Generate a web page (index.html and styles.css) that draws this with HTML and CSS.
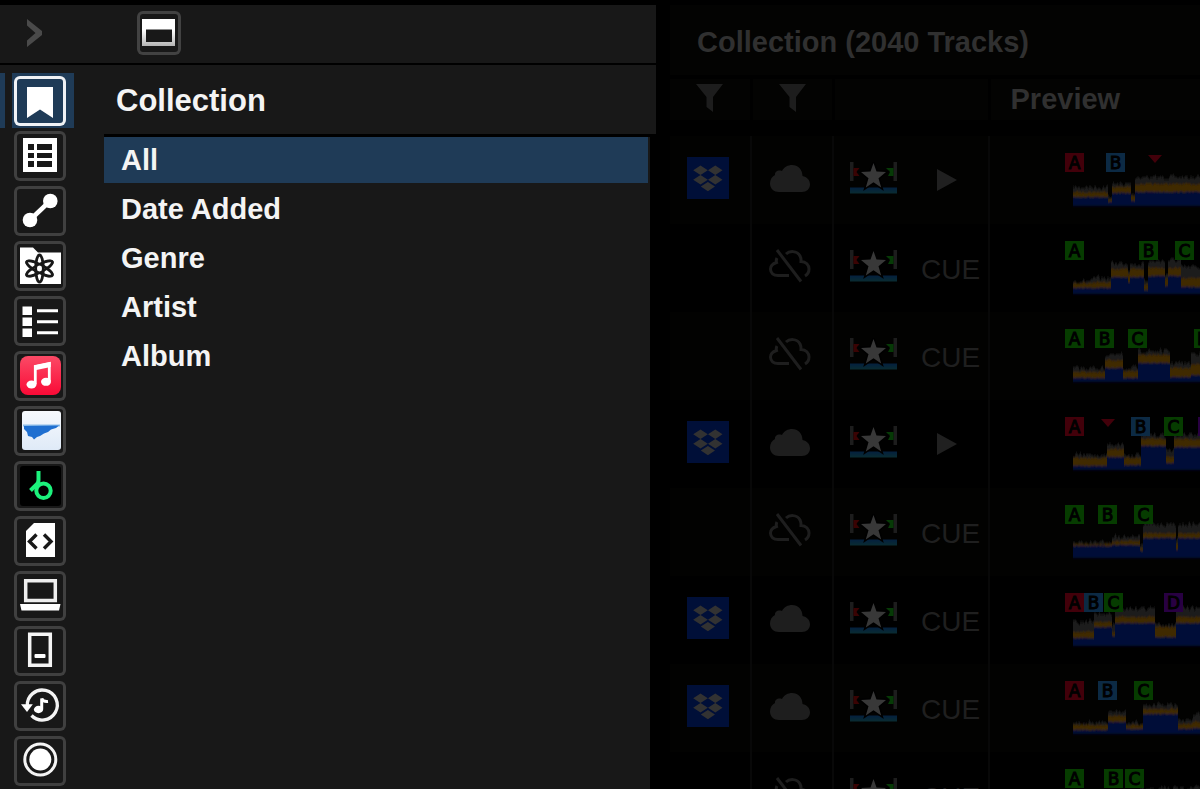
FILE: index.html
```html
<!DOCTYPE html>
<html lang="en">
<head>
<meta charset="utf-8">
<title>Collection</title>
<link rel="stylesheet" href="styles.css">
</head>
<body>
<svg class="defs" aria-hidden="true">
  <defs>
    <linearGradient id="g-pink" x1="0" y1="0" x2="0" y2="1"><stop offset="0" stop-color="#fb4a66"/><stop offset="1" stop-color="#fa0a36"/></linearGradient>
    <linearGradient id="g-sky" x1="0" y1="0" x2="0" y2="1"><stop offset="0" stop-color="#f6f9fd"/><stop offset="1" stop-color="#dfeaf7"/></linearGradient>
    <linearGradient id="g-silver" x1="0" y1="0" x2="0" y2="1"><stop offset=".4" stop-color="#fff"/><stop offset="1" stop-color="#b4b4b4"/></linearGradient>
    <linearGradient id="g-bar" x1="0" y1="0" x2="0" y2="1"><stop offset="0" stop-color="#04203f"/><stop offset="1" stop-color="#0a2c31"/></linearGradient>
    <filter id="haze" x="-5%" y="-20%" width="110%" height="140%"><feGaussianBlur stdDeviation="0.4 1"/></filter>
    <symbol id="funnel" viewBox="0 0 27 28"><path d="M0 0H27L17 13V28L10.500 23V13Z" fill="#1d1d1d"/></symbol>
    <symbol id="dropbox" viewBox="0 0 42 42"><path fill="#000f38" d="M0 0H42V42H0Z"/><path fill="#323232" d="M13.500 8.500L20.800 13.200L13.500 18L6.200 13.200ZM28.300 8.500L35.500 13.200L28.300 18L21 13.200ZM13.500 18L20.800 22.700L13.500 27.400L6.200 22.700ZM28.300 18L35.500 22.700L28.300 27.400L21 22.700ZM20.900 25L28 29.600L20.900 34.300L13.800 29.600Z"/></symbol>
    <symbol id="cloud" viewBox="0 0 40 27"><path fill="#1e1e1e" d="M9 27C4 27 0 23.500 0 18.500C0 14.500 2 11.500 5 10C4.500 7 8 4.500 12 6C14 2 18 0 22 0C28 0 32.500 4.500 32.500 11C37 12 40 15 40 19.500C40 24 36.500 27 32 27Z"/></symbol>
    <symbol id="cloud-off" viewBox="0 0 42 34"><g fill="none" stroke="#1e1e1e" stroke-width="3"><path d="M8 9C7 11 7 12 7.500 13.500C3 15 1.500 17 1.500 20C1.500 24 4.500 26.500 9 26.500H20"/><path d="M17 5C20 2 28 1 31 7C32.500 10 32 12 32 12.500C37 12.500 40 16 40 20C40 23.500 38.500 25.500 36 27"/><path d="M8 1L32 32.500"/></g></symbol>
    <symbol id="rated" viewBox="0 0 47 32"><path fill="#1d1d1d" d="M0 0H3.500V19H0ZM43.500 0H47V19H43.500Z"/><path fill="#3a0303" d="M3.500 6H9.500L6.500 10L9.500 14H3.500Z"/><path fill="#063a06" d="M43.500 6H36L40 10L38 14H43.500Z"/><path fill="url(#g-bar)" d="M0 25.500H47V31.500H0Z"/><path fill="#383838" stroke="#000" stroke-width="3" paint-order="stroke" d="M23.500 1L26.500 9.500L36 10L28.500 16.200L31.200 25.500L23.500 20.300L15.800 25.500L18.500 16.200L11 10L20.500 9.500Z"/></symbol>
    <symbol id="play" viewBox="0 0 20 22"><path fill="#202020" d="M0 0L20 11L0 22Z"/></symbol>
  </defs>
</svg>
<div class="app">
  <aside class="browser">
    <div class="toolbar">
      <button class="expand" aria-label="Expand"><svg width="15" height="28" viewBox="0 0 15 28"><path d="M0 0L15 12V16L0 28V21.500L8.500 14L0 6.500Z" fill="#4a4a4a"/></svg></button>
      <button class="view" aria-label="Panel view"><svg width="44" height="44" viewBox="0 0 44 44"><path fill="url(#g-silver)" fill-rule="evenodd" d="M5 8H38V35H5ZM9 18.500V31H35V18.500Z"/></svg></button>
    </div>
    <div class="body">
      <nav aria-label="Sources">
        <ul class="rail">
          <li class="active"><button aria-label="Collection"><svg viewBox="0 0 52 50"><path fill="#fff" d="M13 11H39V42L26 33.500L13 42Z"/></svg></button></li>
          <li><button aria-label="Playlists"><svg viewBox="0 0 52 50"><path fill="#fff" fill-rule="evenodd" d="M9 7H43V41H9ZM14 13V19H20V13ZM23 13V19H38V13ZM14 22V27H20V22ZM23 22V27H38V22ZM14 30V36H20V30ZM23 30V36H38V30Z"/></svg></button></li>
          <li><button aria-label="Matching"><svg viewBox="0 0 52 50"><path d="M16 34L36 15" stroke="#fff" stroke-width="4.500"/><circle cx="16" cy="34" r="7.300" fill="#fff"/><circle cx="36.300" cy="15" r="7.300" fill="#fff"/></svg></button></li>
          <li><button aria-label="Intelligent playlists"><svg viewBox="0 0 52 50"><path fill="#fff" d="M6 6.500H19L24 11.500H47V43H6Z"/><g fill="#fff" stroke="#181818" stroke-width="2.800"><ellipse cx="25.500" cy="27.500" rx="4" ry="14.500" transform="rotate(62 25.500 27.500)"/><ellipse cx="25.500" cy="27.500" rx="4" ry="14.500" transform="rotate(-62 25.500 27.500)"/><ellipse cx="25.500" cy="27.500" rx="3.800" ry="13.500"/></g><g fill="none" stroke="#181818" stroke-width="2.200"><ellipse cx="25.500" cy="27.500" rx="4" ry="14.500" transform="rotate(62 25.500 27.500)"/><ellipse cx="25.500" cy="27.500" rx="4" ry="14.500" transform="rotate(-62 25.500 27.500)"/></g><circle cx="25.500" cy="27.500" r="1.800" fill="#fff"/></svg></button></li>
          <li><button aria-label="Track list"><svg viewBox="0 0 52 50"><path fill="#fff" d="M8.500 10.500H18V19H8.500ZM8.500 21.500H18V30H8.500ZM8.500 32.500H18V41H8.500ZM23 13.200H44V16.200H23ZM23 24.200H44V27.200H23ZM23 35.200H44V38.200H23Z"/></svg></button></li>
          <li><button aria-label="Music"><svg viewBox="0 0 52 50"><rect x="6" y="5" width="41" height="39" rx="8" fill="url(#g-pink)"/><path d="M21.300 33V15.500L35.300 12.500V30" fill="none" stroke="#fff" stroke-width="2.800"/><path d="M20 14.500L36.700 11V16L20 19.500Z" fill="#fff"/><ellipse cx="17.500" cy="33.500" rx="5" ry="4" fill="#fff"/><ellipse cx="32" cy="30.800" rx="5" ry="4" fill="#fff"/></svg></button></li>
          <li><button aria-label="Streaming"><svg viewBox="0 0 52 50"><rect x="8" y="5" width="39" height="39" rx="3" fill="url(#g-sky)"/><path d="M9 19.500H46" stroke="#8dbdea" stroke-width="2"/><path fill="#1f6fd0" d="M10 20L45 19.500L42 22L37 23.500L34 26L30 27.500L26 30L23 31L20 33.500L18 31L14 30L13 26L10 23Z"/></svg></button></li>
          <li><button aria-label="Beatport"><svg viewBox="0 0 52 50"><rect x="6" y="5" width="41" height="40" rx="3" fill="#000"/><g fill="none" stroke="#1cf27c" stroke-width="4"><circle cx="29.500" cy="29.700" r="7.200"/><path d="M24.500 10V19Q24.500 22 22 24L16.500 29.500"/></g></svg></button></li>
          <li><button aria-label="XML"><svg viewBox="0 0 52 50"><path fill="#fff" d="M20 7H41V41H12V15Z"/><path d="M22.500 18.500L15.500 25.500L22.500 32.500M30 18.500L37 25.500L30 32.500" fill="none" stroke="#181818" stroke-width="3.400"/></svg></button></li>
          <li><button aria-label="Explorer"><svg viewBox="0 0 52 50"><path fill="none" stroke="#eee" stroke-width="3.500" d="M11.700 9.700H41.300V29.500H11.700Z"/><path fill="#fff" d="M6 33H46.500L45 39.500H7.500Z"/></svg></button></li>
          <li><button aria-label="Devices"><svg viewBox="0 0 52 50"><path fill="none" stroke="#f4f4f4" stroke-width="3.500" d="M15.700 8.200H36.300V39.200H15.700Z"/><rect x="20.500" y="28" width="11" height="4" rx="1" fill="#fff"/></svg></button></li>
          <li><button aria-label="Histories"><svg viewBox="0 0 52 50"><path fill="none" stroke="#f4f4f4" stroke-width="3.300" d="M13.300 25A15 15 0 1 1 17.500 34.500"/><path fill="#fff" d="M7 23.300H18.800L13 31Z"/><ellipse cx="24.500" cy="28.500" rx="4.600" ry="3.700" fill="#fff"/><path d="M27.700 28V17.500Q29 21 34 20.500" fill="none" stroke="#fff" stroke-width="3"/></svg></button></li>
          <li><button aria-label="Record"><svg viewBox="0 0 52 50"><circle cx="26.300" cy="23.500" r="15.500" fill="none" stroke="#f4f4f4" stroke-width="3"/><circle cx="26.300" cy="23.500" r="11" fill="#fff"/></svg></button></li>
        </ul>
      </nav>
      <section class="tree">
        <h1>Collection</h1>
        <ul class="nodes">
          <li><a class="selected" href="#all">All</a></li>
          <li><a href="#date">Date Added</a></li>
          <li><a href="#genre">Genre</a></li>
          <li><a href="#artist">Artist</a></li>
          <li><a href="#album">Album</a></li>
        </ul>
      </section>
    </div>
  </aside>
  <main class="tracks">
    <h2>Collection (2040 Tracks)</h2>
    <table>
      <colgroup><col class="c-drop"><col class="c-cloud"><col class="c-cue"><col></colgroup>
      <thead>
        <tr>
          <th aria-label="Filter source"><svg width="27" height="28"><use href="#funnel"/></svg></th>
          <th aria-label="Filter cloud"><svg width="27" height="28"><use href="#funnel"/></svg></th>
          <th aria-label="Cue"></th>
          <th class="preview">Preview</th>
        </tr>
      </thead>
      <tbody id="rows"></tbody>
    </table>
  </main>
</div>
<script src="app.js"></script>
</body>
</html>
```

FILE: styles.css
```css
* { box-sizing: border-box; }

body {
  margin: 0;
  background: #000;
  color: #f4f4f4;
  font-family: "Liberation Sans", Arial, sans-serif;
  overflow: hidden;
}

ul { list-style: none; margin: 0; padding: 0; }
svg { display: block; }
button { padding: 0; border: 0; background: none; }
.defs { position: absolute; width: 0; height: 0; }

.app {
  display: grid;
  grid-template-columns: minmax(0, 656fr) minmax(0, 530fr);
  gap: 14px;
  height: 100vh;
  padding-top: 5px;
}

.browser {
  display: flex;
  flex-direction: column;
  gap: 2px;
  min-height: 0;
}

.toolbar {
  display: flex;
  align-items: center;
  gap: 95px;
  height: 58px;
  flex: none;
  padding-left: 27px;
  padding-bottom: 3px;
  background: #181818;
}

.view {
  border-radius: 6px;
  box-shadow: inset 0 0 0 3px #424242;
}

.body {
  display: flex;
  flex: 1;
  min-height: 0;
  background: linear-gradient(#181818, #181818) left / calc(100% - 6px) 100% no-repeat;
}

.rail { width: 104px; padding-top: 8px; }
.rail li { height: 55px; padding: 3px 0 0 14px; }
.rail svg { width: 52px; height: 50px; }
.rail button {
  border-radius: 6px;
  box-shadow: inset 0 0 0 3px #404040;
}
.rail .active {
  background: linear-gradient(90deg, #1f3b57 5px, #181818 5px 12px, #1f3b57 12px 74px, #181818 74px);
}
.rail .active button { box-shadow: inset 0 0 0 3px #f0f2f5; }

.tree { flex: 1; min-width: 0; }

h1 {
  margin: 0;
  height: 72px;
  padding-left: 12px;
  border-bottom: 3px solid #000;
  background: #181818;
  font-size: 31px;
  line-height: 72px;
}

.nodes { padding-right: 8px; }
.nodes li { height: 49px; }
.nodes a {
  display: block;
  height: 46px;
  padding-left: 17px;
  color: inherit;
  font-size: 29px;
  font-weight: bold;
  line-height: 46px;
  text-decoration: none;
}
.nodes .selected { background: #1f3b57; }

.tracks { min-width: 0; overflow: hidden; }

h2 {
  margin: 0 0 4px;
  height: 70px;
  padding-left: 27px;
  background: #030302;
  color: #303030;
  font-size: 29px;
  line-height: 74px;
}

table {
  width: 100%;
  table-layout: fixed;
  border-collapse: collapse;
}
.c-drop { width: 81px; }
.c-cloud { width: 82px; }
.c-cue { width: 156px; }

th {
  height: 41px;
  padding: 0;
  border-right: 3px solid #000;
  background: #030302;
}
th svg { margin: 0 auto 4px; }
th.preview {
  padding-left: 20px;
  border-right: 0;
  color: #303030;
  font-size: 29px;
  line-height: 41px;
  text-align: left;
}
thead { border-bottom: 16px solid #000; }

td {
  height: 88px;
  padding: 0 4px 4px 0;
  border-right: 2px solid #080808;
  vertical-align: middle;
}
td:last-child { padding: 0; border-right: 0; overflow: hidden; }
tr:nth-child(odd) td { background: #020201; }
.icon { margin: 0 auto; }
.icon.off { margin-left: 17px; }
.cue {
  display: flex;
  align-items: center;
  gap: 24px;
  padding-left: 16px;
  color: #1f1f1f;
  font-size: 28px;
  line-height: 32px;
}
.cue span { padding-top: 8px; }
.cue .play { margin: 4px 0 0 16px; }

.mark-label {
  font: 17px "DejaVu Sans", sans-serif;
  stroke: #000;
  text-anchor: middle;
}
```

FILE: app.js
```js
// Badge: [letter, x, colour]; wave segment: [start, end, blue top, orange top, grey top].
const colours = { r: '#42000a', b: '#0c2a44', g: '#063c00', p: '#280042' };
const tracks = [
  { drop: 1, cloud: 1, play: 1, marks: [['A', 75, 'r'], ['B', 116, 'b'], ['', 158, 'r']],
    wave: [[83, 118, 61, 56, 51], [118, 122, 66, 63, 60], [122, 141, 57, 51, 48], [141, 145, 65, 60, 58], [145, 211, 56, 48, 41]] },
  { marks: [['A', 75, 'g'], ['B', 149, 'g'], ['C', 185, 'g']],
    wave: [[83, 103, 64, 59, 57], [103, 121, 64, 58, 54], [121, 138, 53, 45, 39], [138, 140, 58, 50, 45], [140, 154, 53, 45, 40], [154, 158, 66, 60, 56], [158, 175, 52, 44, 37], [175, 178, 62, 55, 50], [178, 191, 52, 44, 36], [191, 211, 63, 54, 43]] },
  { marks: [['A', 75, 'g'], ['B', 105, 'g'], ['C', 138, 'g'], ['D', 204, 'g']],
    wave: [[83, 115, 66, 60, 56], [115, 133, 56, 48, 43], [133, 148, 66, 59, 56], [148, 180, 51, 43, 39], [180, 201, 65, 56, 51], [201, 211, 63, 52, 41]] },
  { drop: 1, cloud: 1, play: 1, marks: [['A', 75, 'r'], ['', 111, 'r'], ['B', 141, 'b'], ['C', 174, 'g'], ['D', 208, 'p']],
    wave: [[83, 117, 66, 58, 55], [117, 134, 57, 49, 44], [134, 151, 65, 58, 55], [151, 176, 46, 39, 35], [176, 184, 63, 57, 50], [184, 211, 47, 39, 35]] },
  { marks: [['A', 75, 'g'], ['B', 108, 'g'], ['C', 144, 'g']],
    wave: [[83, 122, 58, 56, 54], [122, 150, 57, 53, 48], [150, 153, 63, 60, 57], [153, 186, 50, 45, 36], [186, 188, 62, 56, 50], [188, 211, 50, 45, 36]] },
  { drop: 1, cloud: 1, marks: [['A', 75, 'r'], ['B', 94, 'b'], ['C', 114, 'g'], ['D', 174, 'p']],
    wave: [[83, 104, 62, 56, 46], [104, 122, 51, 46, 38], [122, 125, 60, 56, 50], [125, 165, 47, 41, 32], [165, 186, 61, 51, 48], [186, 211, 47, 41, 32]] },
  { drop: 1, cloud: 1, marks: [['A', 75, 'r'], ['B', 108, 'b'], ['C', 144, 'g']],
    wave: [[83, 118, 66, 61, 59], [118, 136, 58, 52, 48], [136, 153, 65, 61, 59], [153, 188, 50, 45, 41], [188, 203, 65, 60, 57], [203, 211, 64, 58, 50]] },
  { marks: [['A', 75, 'g'], ['B', 114, 'g'], ['C', 135, 'g']],
    wave: [[83, 150, 62, 57, 52], [150, 211, 50, 44, 36]] },
];

// Repeatable noise, so that each waveform is drawn alike on every load.
let seed = 7;
const noise = () => (seed = (seed * 16807) % 2147483647) / 2147483647 - 0.5;

function layer(wave, index, jitter, fill) {
  let points = '83,70';
  for (const seg of wave) {
    for (let x = seg[0]; x <= seg[1]; x++) points += ` ${x},${(seg[index] + noise() * jitter).toFixed(1)}`;
  }
  return `<polygon points="${points} 211,70" fill="${fill}"/>`;
}

function mark([letter, x, c]) {
  if (!letter) return `<path d="M${x} 19h14l-7 8z" fill="${colours[c]}"/>`;
  return `<rect x="${x}" y="17" width="19" height="19" fill="${colours[c]}"/>` +
    `<text class="mark-label" x="${x + 9.5}" y="33">${letter}</text>`;
}

const use = (id, w, h, cls) => `<svg class="${cls}" width="${w}" height="${h}"><use href="#${id}"/></svg>`;

document.getElementById('rows').innerHTML = tracks.map(t => `<tr>
  <td>${t.drop ? use('dropbox', 42, 42, 'icon') : ''}</td>
  <td>${t.cloud ? use('cloud', 40, 27, 'icon') : use('cloud-off', 42, 34, 'icon off')}</td>
  <td><div class="cue">${use('rated', 47, 32, 'mark')}${t.play ? use('play', 20, 22, 'play') : '<span>CUE</span>'}</div></td>
  <td><svg width="211" height="88"><g filter="url(#haze)">${layer(t.wave, 4, 6, '#1b1b1b')}${layer(t.wave, 3, 2, '#402a06')}${layer(t.wave, 2, 1, '#000f38')}</g>${t.marks.map(mark).join('')}</svg></td>
</tr>`).join('');
```
